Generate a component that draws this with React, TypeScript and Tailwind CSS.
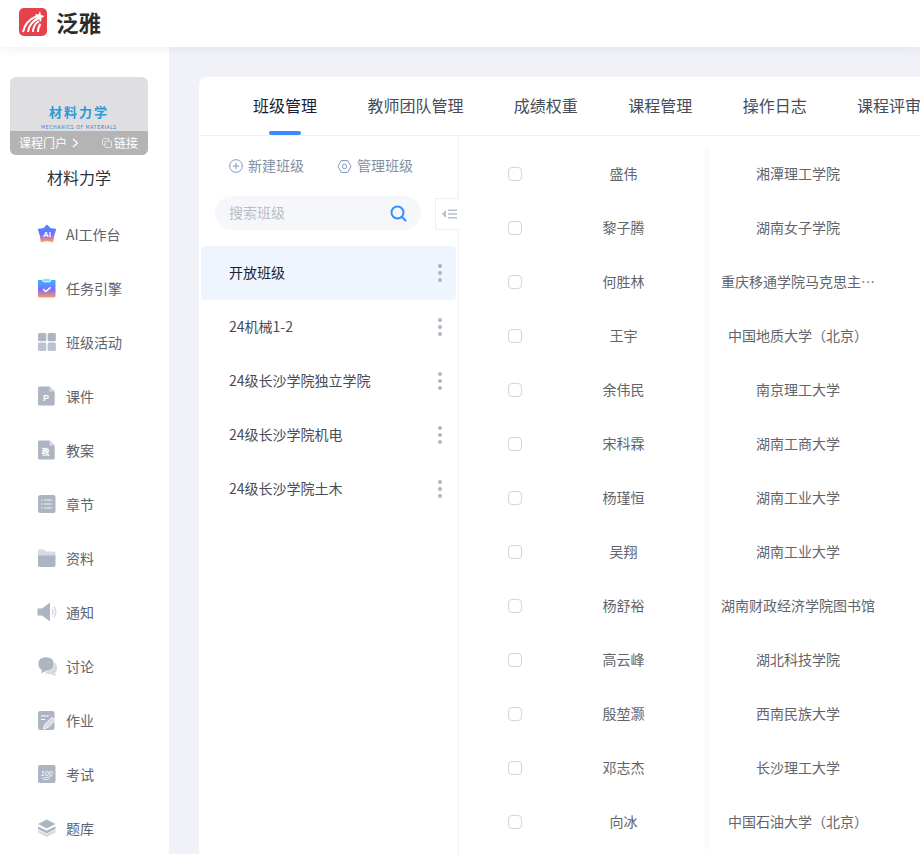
import { ReactNode } from "react"

const FONT = "font-['Microsoft_YaHei','Noto_Sans_CJK_SC','Noto_Sans',sans-serif]"

const tabs = ["班级管理", "教师团队管理", "成绩权重", "课程管理", "操作日志", "课程评审"]
const classes = ["开放班级", "24机械1-2", "24级长沙学院独立学院", "24级长沙学院机电", "24级长沙学院土木"]
const students = [
  ["盛伟", "湘潭理工学院"],
  ["黎子腾", "湖南女子学院"],
  ["何胜林", "重庆移通学院马克思主…"],
  ["王宇", "中国地质大学（北京）"],
  ["余伟民", "南京理工大学"],
  ["宋科霖", "湖南工商大学"],
  ["杨瑾恒", "湖南工业大学"],
  ["吴翔", "湖南工业大学"],
  ["杨舒裕", "湖南财政经济学院图书馆"],
  ["高云峰", "湖北科技学院"],
  ["殷堃灏", "西南民族大学"],
  ["邓志杰", "长沙理工大学"],
  ["向冰", "中国石油大学（北京）"],
]

const G = "#aeb5c2"
const L = "#d5dae3"

function Icon({ children }: { children: ReactNode }) {
  return (
    <svg width="20" height="20" viewBox="0 0 20 20">
      {children}
    </svg>
  )
}

const navItems: { label: string; icon: ReactNode }[] = [
  {
    label: "AI工作台",
    icon: (
      <Icon>
        <defs>
          <linearGradient id="ai" x1="0" y1="0" x2="0" y2="1">
            <stop offset="0" stopColor="#3f8cff" />
            <stop offset="0.55" stopColor="#7a6cff" />
            <stop offset="1" stopColor="#ff9a5c" />
          </linearGradient>
        </defs>
        <path
          d="M10 1.5 L13.2 4.8 L18.3 5.6 L16.4 11.5 L15.5 17.5 L10 16.2 L4.5 17.5 L3.6 11.5 L1.7 5.6 L6.8 4.8 Z"
          fill="url(#ai)"
          stroke="url(#ai)"
          strokeWidth="1.6"
          strokeLinejoin="round"
        />
        <text x="10" y="13" textAnchor="middle" fontSize="8" fontWeight="700" fill="#fff" fontFamily="Liberation Sans">AI</text>
      </Icon>
    ),
  },
  {
    label: "任务引擎",
    icon: (
      <Icon>
        <defs>
          <linearGradient id="task" x1="0" y1="0" x2="0" y2="1">
            <stop offset="0" stopColor="#35b6ff" />
            <stop offset="0.55" stopColor="#7a6cff" />
            <stop offset="1" stopColor="#ff9a5c" />
          </linearGradient>
        </defs>
        <path d="M1 2 H18.5 V18 Q18.5 19.5 17 19.5 H2.5 Q1 19.5 1 18 Z" fill="url(#task)" />
        <rect x="5.7" y="0.5" width="8" height="3.4" rx="1.5" fill="#8fdcff" stroke="#fff" strokeWidth="0.8" />
        <path d="M6 11 L8.8 13.6 L13.6 9.4" fill="none" stroke="#fff" strokeWidth="1.5" />
      </Icon>
    ),
  },
  {
    label: "班级活动",
    icon: (
      <Icon>
        <rect x="1" y="1" width="8.3" height="8.3" rx="1.5" fill={G} />
        <rect x="10.6" y="1" width="8.3" height="8.3" rx="1.5" fill={G} />
        <rect x="1" y="10.6" width="8.3" height="8.3" rx="1.5" fill="#bcc3cf" />
        <rect x="10.6" y="10.6" width="8.3" height="8.3" rx="1.5" fill="#bcc3cf" />
      </Icon>
    ),
  },
  {
    label: "课件",
    icon: (
      <Icon>
        <path d="M1 2 Q1 0.5 2.5 0.5 H12.5 L17.7 5.5 V18 Q17.7 19.5 16.2 19.5 H2.5 Q1 19.5 1 18 Z" fill={G} />
        <path d="M12.5 0.5 L17.7 5.5 H12.5 Z" fill={L} />
        <text x="9" y="15" textAnchor="middle" fontSize="9" fontWeight="700" fill="#fff" fontFamily="Liberation Sans">P</text>
      </Icon>
    ),
  },
  {
    label: "教案",
    icon: (
      <Icon>
        <path d="M1 2 Q1 0.5 2.5 0.5 H12.5 L17.7 5.5 V18 Q17.7 19.5 16.2 19.5 H2.5 Q1 19.5 1 18 Z" fill={G} />
        <path d="M12.5 0.5 L17.7 5.5 H12.5 Z" fill={L} />
        <text x="8.5" y="15" textAnchor="middle" fontSize="8" fontWeight="700" fill="#fff" fontFamily="Noto Sans CJK SC">教</text>
      </Icon>
    ),
  },
  {
    label: "章节",
    icon: (
      <Icon>
        <rect x="1" y="1" width="17.5" height="18" rx="2.5" fill={G} />
        <path d="M7 6 H15 M7 10 H15 M7 14 H15 M4 6 H5.5 M4 10 H5.5 M4 14 H5.5" stroke="#fff" strokeWidth="1.2" opacity="0.85" />
      </Icon>
    ),
  },
  {
    label: "资料",
    icon: (
      <Icon>
        <path d="M1 3 Q1 1.5 2.5 1.5 H7 L9 3.5 H16.5 Q18.5 3.5 18.5 5.5 V8 H1 Z" fill={L} />
        <path d="M1 7.5 H18.5 V17 Q18.5 19 16.5 19 H3 Q1 19 1 17 Z" fill={G} />
      </Icon>
    ),
  },
  {
    label: "通知",
    icon: (
      <Icon>
        <path d="M0.5 6.5 H5 L13 0.5 V19.5 L5 13.5 H0.5 Z" fill={G} />
        <path d="M15 7 Q17 10 15 13 M17 4.5 Q20.5 10 17 15.5" fill="none" stroke={L} strokeWidth="1.4" />
      </Icon>
    ),
  },
  {
    label: "讨论",
    icon: (
      <Icon>
        <path d="M11 5 Q20 4 20 12 Q20 16 18 17 L19 20 L13 18 Q8 18 7 14 Z" fill={L} />
        <path d="M9 1 Q17 1 17 8 Q17 15 9 15 L4 18 L4.5 14 Q1 12 1 8 Q1 1 9 1 Z" fill={G} stroke="#fff" strokeWidth="0.6" />
      </Icon>
    ),
  },
  {
    label: "作业",
    icon: (
      <Icon>
        <rect x="1" y="1" width="16.5" height="19" rx="2" fill={G} />
        <path d="M4 6 H11.5 M4 9.5 H8" stroke="#fff" strokeWidth="1.2" />
        <path d="M6.5 19 L7.5 14.5 L15 7.5 L18.5 10 L11 17.5 Z" fill={L} stroke="#fff" strokeWidth="0.8" />
      </Icon>
    ),
  },
  {
    label: "考试",
    icon: (
      <Icon>
        <rect x="1" y="1" width="17.5" height="18" rx="2" fill={G} />
        <text x="9.7" y="11.5" textAnchor="middle" fontSize="7" fontStyle="italic" fill="#fff" fontFamily="Liberation Sans">100</text>
        <path d="M4.5 14.5 L14.5 12.5 M6.5 16 L12.5 15" stroke="#fff" strokeWidth="0.7" />
      </Icon>
    ),
  },
  {
    label: "题库",
    icon: (
      <Icon>
        <path d="M1 12 L9.7 16 L18.5 12 V14.5 L9.7 19 L1 14.5 Z" fill={L} />
        <path d="M1 8.5 L9.7 12.5 L18.5 8.5 V11 L9.7 15.5 L1 11 Z" fill={G} />
        <path d="M9.7 1.5 L18.5 6 L9.7 10.5 L1 6 Z" fill={G} />
      </Icon>
    ),
  },
]

function Logo() {
  return (
    <svg width="28" height="28" viewBox="0 0 28 28">
      <rect width="28" height="28" rx="5" fill="#e6424b" />
      <path d="M4 24 Q6 13 18 8" fill="none" stroke="#fff" strokeWidth="2" />
      <path d="M9 24 Q10 15 19 10.5" fill="none" stroke="#fff" strokeWidth="2" />
      <path d="M14 24 Q14 17 20 13" fill="none" stroke="#fff" strokeWidth="2" />
      <path d="M19 24 Q19 19 21.5 16" fill="none" stroke="#fff" strokeWidth="2" />
      <path d="M21 3 L22 7 L25.5 8 L22.5 10 L22 14 L19.5 11 L16 12 L18 9 L16 6 L19.5 6.5 Z" fill="#fff" />
    </svg>
  )
}

export default function App() {
  return (
    <div className={`h-[854px] w-[920px] overflow-hidden bg-[#f0f2f8] ${FONT}`}>
      {/* Top bar */}
      <header className="relative z-10 flex h-[47px] items-start bg-white pt-[8px] pl-[19px] shadow-[0_2px_12px_rgba(0,0,0,0.06)]">
        <Logo />
        <span className="mt-[3px] ml-[9px] text-[22.5px] leading-none font-bold text-[#2b2b2b]">泛雅</span>
      </header>

      <div className="flex h-[807px]">
        {/* Sidebar */}
        <aside className="w-[169px] shrink-0 bg-white pt-[30px]">
          <div className="ml-[10px] h-[78px] w-[138px] overflow-hidden rounded-md bg-[#dfdee1]">
            <div className="flex h-[54px] flex-col items-center justify-end">
              <span className="text-[13px] leading-[15px] font-bold tracking-[2px] text-[#2b9ad6]">材料力学</span>
              <span className="mt-[5px] mb-[1px] text-[5px] leading-[6px] tracking-[0.6px] whitespace-nowrap text-[#3f7ec2]">MECHANICS OF MATERIALS</span>
            </div>
            <div className="flex h-[24px] items-center justify-between bg-[#b4b4b5] pr-[10px] pl-[9px] text-xs text-white">
              <span className="flex items-center">
                课程门户
                <svg className="ml-[5px]" width="7" height="10" viewBox="0 0 7 10">
                  <path d="M1 1 L5.5 5 L1 9" fill="none" stroke="#fff" strokeWidth="1.3" />
                </svg>
              </span>
              <span className="flex items-center">
                <svg className="mr-[2px]" width="10" height="10" viewBox="0 0 10 10">
                  <rect x="0.5" y="0.5" width="6.5" height="6.5" rx="1" fill="none" stroke="#e4e4e4" />
                  <rect x="3" y="3" width="6.5" height="6.5" rx="1" fill="#b4b4b5" stroke="#e4e4e4" />
                </svg>
                链接
              </span>
            </div>
          </div>
          <div className="mt-[10px] w-[158px] text-center text-base leading-[24px] text-[#2a2f3c]">材料力学</div>
          <nav className="mt-[18px]">
            {navItems.map((item) => (
              <div key={item.label} className="flex h-[54px] items-center pl-[37px] text-sm text-[#5d6370]">
                <span className="flex h-5 w-5 items-center justify-center">{item.icon}</span>
                <span className="ml-[9px]">{item.label}</span>
              </div>
            ))}
          </nav>
        </aside>

        {/* Main card */}
        <main className="mt-[30px] ml-[30px] flex flex-1 flex-col overflow-hidden rounded-tl-lg bg-white">
          <div className="flex h-[59px] shrink-0 border-b border-[#f0f0f0] pl-[54px] text-base whitespace-nowrap text-[#474c59]">
            {tabs.map((tab, i) => (
              <div key={tab} className="relative mr-[50.4px] flex h-[58px] items-center pb-[2px]">
                <span className={i === 0 ? "text-[#181e33]" : ""}>{tab}</span>
                {i === 0 && (
                  <span className="absolute bottom-0 left-[16px] h-[4px] w-[32px] rounded-full bg-[#3a8bff]" />
                )}
              </div>
            ))}
          </div>

          <div className="flex flex-1">
            {/* Class list */}
            <section className="relative w-[260px] shrink-0 border-r border-[#f0f0f0]">
              <div className="flex h-[60px] items-center pl-[30px] text-sm text-[#858fa3]">
                <svg width="14" height="14" viewBox="0 0 14 14" className="mr-[5px]">
                  <circle cx="7" cy="7" r="6.3" fill="none" stroke="#7f97bd" strokeWidth="1" />
                  <path d="M7 3.8 V10.2 M3.8 7 H10.2" stroke="#7f97bd" strokeWidth="1" />
                </svg>
                <span className="pb-[2px]">新建班级</span>
                <svg width="15" height="15" viewBox="0 0 15 15" className="mr-[5px] ml-[33px]">
                  <path d="M4.2 1.6 H10.8 L14 7.5 L10.8 13.4 H4.2 L1 7.5 Z" fill="none" stroke="#7f97bd" strokeWidth="1" strokeLinejoin="round" />
                  <circle cx="7.5" cy="7.5" r="2.2" fill="none" stroke="#7f97bd" strokeWidth="1" />
                </svg>
                <span className="pb-[2px]">管理班级</span>
              </div>
              <div className="ml-[16px] flex h-[34px] w-[206px] items-center justify-between rounded-full bg-[#f5f7fb] pr-[14px] pl-[14px] text-sm text-[#bcbcc4]">
                <span className="pb-[2px]">搜索班级</span>
                <svg width="17" height="17" viewBox="0 0 17 17">
                  <circle cx="7.5" cy="7.5" r="6" fill="none" stroke="#3a8bff" strokeWidth="2" />
                  <path d="M12 12 L15.5 15.5" stroke="#3a8bff" strokeWidth="2" strokeLinecap="round" />
                </svg>
              </div>
              <div className="absolute top-[62px] right-[-1px] flex h-[32px] w-[24px] items-center justify-end border-y border-l border-[#f0f0f0] bg-white pr-[2px]">
                <svg width="15" height="10" viewBox="0 0 15 10">
                  <path d="M0 5 L4 1 V9 Z" fill="#b7bfce" />
                  <path d="M6 1.2 H15 M6 5 H15 M6 8.8 H15" stroke="#b7bfce" strokeWidth="1.4" />
                </svg>
              </div>
              <ul className="mt-[16px] ml-[2px]">
                {classes.map((name, i) => (
                  <li
                    key={name}
                    className={`flex h-[54px] w-[255px] items-center justify-between rounded-sm pr-[14px] pl-[28px] text-sm ${
                      i === 0 ? "bg-[#eef5fe] text-[#181e33]" : "text-[#474c59]"
                    }`}
                  >
                    <span className="pb-[2px]">{name}</span>
                    <span className="flex flex-col gap-[3px]">
                      <span className="h-1 w-1 rounded-full bg-[#aeb5c2]" />
                      <span className="h-1 w-1 rounded-full bg-[#aeb5c2]" />
                      <span className="h-1 w-1 rounded-full bg-[#aeb5c2]" />
                    </span>
                  </li>
                ))}
              </ul>
            </section>

            <section className="flex flex-1 items-start pt-[11px] text-sm text-[#63656b]">
              <div className="relative w-[246px] shrink-0">
                {students.map(([name]) => (
                  <div key={name} className="flex h-[54px] items-center">
                    <div className="flex w-[112px] justify-center">
                      <span className="h-[14px] w-[14px] rounded-sm border border-[#d4d4d4] bg-white" />
                    </div>
                    <div className="w-[105px] pb-[2px] text-center">{name}</div>
                  </div>
                ))}
                <span className="absolute top-0 right-[-7px] bottom-0 w-[7px] bg-gradient-to-r from-black/[0.025] to-transparent" />
              </div>
              <div className="w-[186px] shrink-0">
                {students.map(([name, school]) => (
                  <div key={name} className="flex h-[54px] items-center justify-center pb-[2px] whitespace-nowrap">
                    {school}
                  </div>
                ))}
              </div>
            </section>
          </div>
        </main>
      </div>
    </div>
  )
}
